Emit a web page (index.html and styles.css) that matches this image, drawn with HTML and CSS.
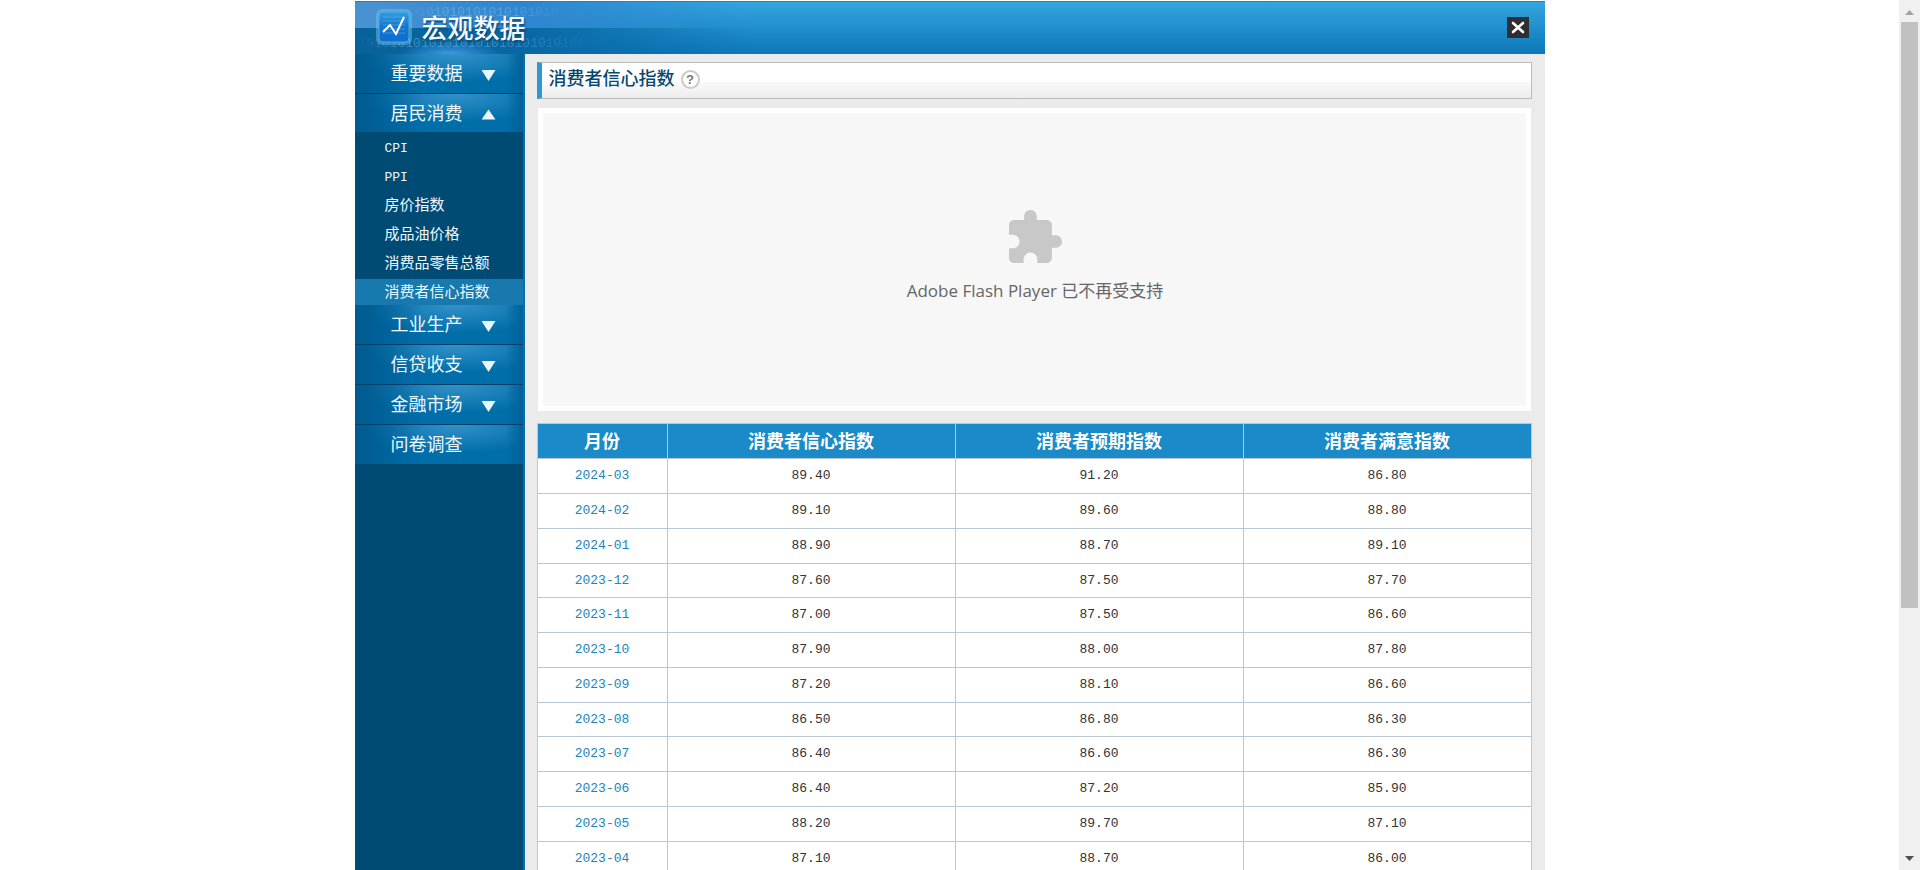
FILE: index.html
```html
<!DOCTYPE html>
<html lang="zh-CN">
<head>
<meta charset="utf-8">
<title>宏观数据 - 消费者信心指数</title>
<link rel="stylesheet" href="styles.css">
</head>
<body>
<div class="viewport">
  <div class="page">
    <header class="header">
      <div class="binary binary-top" aria-hidden="true">01010101010101010101</div>
      <div class="binary binary-bottom" aria-hidden="true">101010101010101010101010101010</div>
      <a class="brand" href="#">
        <svg class="logo" viewBox="0 0 38 38" aria-hidden="true">
          <defs>
            <linearGradient id="lg" x1="0" y1="0" x2="0" y2="1">
              <stop offset="0" stop-color="#2f9fe0"/><stop offset=".5" stop-color="#1674cc"/><stop offset="1" stop-color="#0b6fd0"/>
            </linearGradient>
          </defs>
          <rect x="1" y="1" width="36" height="36" rx="6" fill="#7cc4ef" opacity=".45"/>
          <rect x="4" y="4" width="30" height="30" rx="4" fill="url(#lg)" stroke="#4aa8e8" stroke-width="1"/>
          <path d="M8 9h22M8 13h22M8 17h22M8 21h22M8 25h22" stroke="#6cb4ea" stroke-width="1" opacity=".5"/>
          <path d="M8 24l7-7 6 9 8-17" fill="none" stroke="#fff" stroke-width="2"/>
        </svg>
        <span class="brand-name">宏观数据</span>
      </a>
      <button class="close" type="button" aria-label="关闭">
        <svg viewBox="0 0 22 21" aria-hidden="true"><path d="M6 6l10 9M16 6L6 15" stroke="#fff" stroke-width="2.6" stroke-linecap="round"/></svg>
      </button>
    </header>
    <div class="columns">
      <nav class="sidebar">
        <a class="group" href="#">重要数据<i class="arrow down"></i></a>
        <a class="group open" href="#">居民消费<i class="arrow up"></i></a>
        <ul class="sub">
          <li><a class="latin" href="#">CPI</a></li>
          <li><a class="latin" href="#">PPI</a></li>
          <li><a href="#">房价指数</a></li>
          <li><a href="#">成品油价格</a></li>
          <li><a href="#">消费品零售总额</a></li>
          <li><a class="current" href="#">消费者信心指数</a></li>
        </ul>
        <a class="group" href="#">工业生产<i class="arrow down"></i></a>
        <a class="group" href="#">信贷收支<i class="arrow down"></i></a>
        <a class="group" href="#">金融市场<i class="arrow down"></i></a>
        <a class="group last" href="#">问卷调查</a>
      </nav>
      <main class="main">
        <div class="title-bar">
          <h1>消费者信心指数</h1>
          <button class="help" type="button" aria-label="帮助">?</button>
        </div>
        <div class="flash">
          <svg class="puzzle" viewBox="2 1 21 21" aria-hidden="true"><path fill="#c8c8c8" d="M20.500 11H19V7c0-1.100-.9-2-2-2h-4V3.500C13 2.120 11.880 1 10.500 1S8 2.120 8 3.500V5H4c-1.100 0-1.990.9-1.990 2v3.800H3.500c1.490 0 2.700 1.210 2.700 2.700s-1.210 2.700-2.700 2.700H2V20c0 1.100.9 2 2 2h3.800v-1.500c0-1.490 1.210-2.700 2.700-2.700s2.700 1.210 2.700 2.700V22H17c1.100 0 2-.9 2-2v-4h1.500c1.380 0 2.500-1.120 2.500-2.500S21.880 11 20.500 11z"/></svg>
          <p>Adobe Flash Player 已不再受支持</p>
        </div>
        <table class="data">
          <thead><tr><th class="month" scope="col">月份</th><th scope="col">消费者信心指数</th><th scope="col">消费者预期指数</th><th scope="col">消费者满意指数</th></tr></thead>
          <tbody>
            <tr><td><a href="#">2024-03</a></td><td>89.40</td><td>91.20</td><td>86.80</td></tr>
            <tr><td><a href="#">2024-02</a></td><td>89.10</td><td>89.60</td><td>88.80</td></tr>
            <tr><td><a href="#">2024-01</a></td><td>88.90</td><td>88.70</td><td>89.10</td></tr>
            <tr><td><a href="#">2023-12</a></td><td>87.60</td><td>87.50</td><td>87.70</td></tr>
            <tr><td><a href="#">2023-11</a></td><td>87.00</td><td>87.50</td><td>86.60</td></tr>
            <tr><td><a href="#">2023-10</a></td><td>87.90</td><td>88.00</td><td>87.80</td></tr>
            <tr><td><a href="#">2023-09</a></td><td>87.20</td><td>88.10</td><td>86.60</td></tr>
            <tr><td><a href="#">2023-08</a></td><td>86.50</td><td>86.80</td><td>86.30</td></tr>
            <tr><td><a href="#">2023-07</a></td><td>86.40</td><td>86.60</td><td>86.30</td></tr>
            <tr><td><a href="#">2023-06</a></td><td>86.40</td><td>87.20</td><td>85.90</td></tr>
            <tr><td><a href="#">2023-05</a></td><td>88.20</td><td>89.70</td><td>87.10</td></tr>
            <tr><td><a href="#">2023-04</a></td><td>87.10</td><td>88.70</td><td>86.00</td></tr>
          </tbody>
        </table>
      </main>
    </div>
  </div>
</div>
<div class="scrollbar" aria-hidden="true">
  <svg class="cap" viewBox="0 0 21 22"><path d="M6 15h9l-4.500-5z" fill="#a3a3a3"/></svg>
  <div class="track"><div class="thumb"></div></div>
  <svg class="cap" viewBox="0 0 21 22"><path d="M6 8h9l-4.500 5z" fill="#505050"/></svg>
</div>
</body>
</html>
```
FILE: styles.css
```css
* { box-sizing: border-box; }
body {
  margin: 0;
  height: 100vh;
  display: flex;
  overflow: hidden;
  background: #fff;
  font-family: "Liberation Sans", "Noto Sans CJK SC", sans-serif;
}
a { color: inherit; text-decoration: none; }
button { border: 0; padding: 0; cursor: pointer; }
.viewport { flex: 1; overflow: hidden; display: flex; justify-content: center; }
.page {
  width: 100%;
  max-width: 1190px;
  padding-top: 1px;
  display: flex;
  flex-direction: column;
}

.header {
  position: relative;
  flex: none;
  height: 53px;
  padding: 0 16px 2px 20px;
  display: flex;
  align-items: center;
  justify-content: space-between;
  border-top: 1px solid #2d7fa8;
  overflow: hidden;
  background:
    radial-gradient(ellipse 50px 12px at 95px 100%, #3c9be6, transparent),
    linear-gradient(90deg, #4a93d2 0, #2f86d0 170px, transparent 400px) 0 0 / 100% 26px no-repeat,
    linear-gradient(90deg, #086299 0, #0868a5 170px, transparent 400px) 0 26px / 100% 26px no-repeat,
    linear-gradient(#33a6df, #0e77b8);
}
.binary {
  position: absolute;
  font: 13px/14px "Liberation Mono", monospace;
  color: #8cc8ee;
  opacity: .4;
  white-space: nowrap;
  -webkit-mask-image: linear-gradient(90deg, transparent, #000 20%, #000 60%, transparent);
  mask-image: linear-gradient(90deg, transparent, #000 20%, #000 60%, transparent);
}
.binary-top { left: 56px; top: 4px; }
.binary-bottom { left: 4px; top: 35px; }
.brand {
  position: relative;
  display: flex;
  align-items: center;
  gap: 9px;
  color: #f4faff;
  font-size: 26px;
  line-height: 32px;
  font-weight: 500;
  text-shadow: 1px 2px 2px #064a7c;
}
.brand-name { padding-top: 4px; }
.logo { width: 38px; height: 38px; }
.close { width: 22px; height: 21px; background: #2d2f30; }
.close svg { display: block; width: 22px; height: 21px; }

.columns { flex: 1; display: flex; }
.sidebar {
  flex: none;
  width: 170px;
  background: #004b74;
  border-right: 2px solid #0a6fa8;
  color: #eef8ff;
}
.group {
  display: flex;
  align-items: center;
  justify-content: space-between;
  height: 40px;
  padding: 1px 27px 0 36px;
  font-size: 18px;
  line-height: 24px;
  border-bottom: 1px solid #00406a;
  background:
    linear-gradient(90deg, #005a8f, transparent 40%, transparent 90%, #006198),
    radial-gradient(ellipse 100px 28px at 60% 0, #3391c8, transparent),
    #006ea9;
}
.group.open { height: 38px; border-bottom: 0; }
.group.last { height: 39px; border-bottom: 0; }
.arrow { width: 14px; height: 14px; background: #eaf6ff; }
.down { clip-path: polygon(0 3px, 100% 3px, 50% 100%); }
.up { clip-path: polygon(50% 3px, 100% 13px, 0 13px); }
.sub {
  list-style: none;
  margin: 0;
  padding: 2px 0 0;
  display: grid;
  gap: 3px;
  font-size: 15px;
  line-height: 26px;
}
.sub a { display: block; height: 26px; padding-left: 30px; }
.sub .latin { font-family: "Liberation Mono", monospace; font-size: 13px; line-height: 30px; }
.sub .current { background: #1779ae; }

.main {
  flex: 1;
  min-width: 0;
  padding: 8px 13px 0 12px;
  background: #ebebeb;
}
.title-bar {
  display: flex;
  align-items: center;
  gap: 6px;
  height: 37px;
  padding: 0 7px 3px;
  border: 1px solid #b8bbbc;
  border-left: 5px solid #3197d3;
  background: linear-gradient(#fff 55%, #f9f9f9 55%, #ededed);
}
h1 { margin: 0; font-size: 18px; line-height: 24px; font-weight: 500; color: #06486f; }
.help {
  width: 19px;
  height: 19px;
  border: 2px solid #cacaca;
  border-radius: 50%;
  background: #fff;
  color: #777;
  font: bold 13px/15px "Liberation Sans", sans-serif;
}
.flash {
  height: 303px;
  margin: 9px 1px 12px;
  padding: 0 0 6px 2px;
  border: 5px solid #fff;
  background: #f7f7f7;
  display: flex;
  flex-direction: column;
  align-items: center;
  justify-content: center;
  gap: 16px;
}
.puzzle { width: 53px; height: 53px; }
.flash p {
  margin: 0;
  font: 17px/24px "Open Sans", "Noto Sans CJK SC", sans-serif;
  color: #666;
}

.data {
  width: 100%;
  table-layout: fixed;
  border-collapse: collapse;
  background: #fff;
  color: #333;
  font: 13px/20px "Liberation Mono", monospace;
  text-align: center;
}
.data th, .data td { border: 1px solid #b9c8d3; padding: 0; height: 35px; }
.data tbody tr:nth-child(4n) td { height: 34px; }
.data th {
  padding-bottom: 2px;
  background: #1b8ac8;
  color: #fff;
  font: bold 18px/24px "Noto Sans CJK SC", sans-serif;
}
.data .month { width: 130px; }
.data td a { color: #2085b8; }

.scrollbar { flex: none; width: 21px; display: flex; flex-direction: column; background: #f0f0f0; }
.cap { flex: none; width: 21px; height: 22px; }
.track { flex: 1; padding: 0 2px; }
.thumb { height: 71%; background: #c1c1c1; }
```
